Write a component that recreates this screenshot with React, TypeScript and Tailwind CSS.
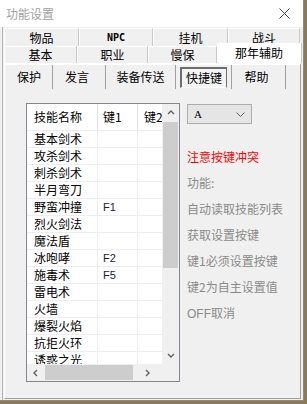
const skills: [string, string][] = [
  ["基本剑术", ""],
  ["攻杀剑术", ""],
  ["刺杀剑术", ""],
  ["半月弯刀", ""],
  ["野蛮冲撞", "F1"],
  ["烈火剑法", ""],
  ["魔法盾", ""],
  ["冰咆哮", "F2"],
  ["施毒术", "F5"],
  ["雷电术", ""],
  ["火墙", ""],
  ["爆裂火焰", ""],
  ["抗拒火环", ""],
  ["诱惑之光", ""],
];

function Chevron({ dir }: { dir: "up" | "down" | "left" | "right" }) {
  const d = {
    up: "M1 5 L4 2 L7 5",
    down: "M1 2 L4 5 L7 2",
    left: "M5 1 L2 4 L5 7",
    right: "M2 1 L5 4 L2 7",
  }[dir];
  return (
    <svg width="8" height="8" viewBox="0 0 8 8">
      <path d={d} fill="none" stroke="#606060" strokeWidth="1.4" />
    </svg>
  );
}

export default function App() {
  return (
    <div className="w-[307px] h-[404px] bg-[#8c7a52] overflow-hidden font-['Noto_Sans_CJK_SC',sans-serif] text-[12px] text-black">
      <div className="w-[304px] h-[401px] bg-[#f0f0f0] border-r border-b border-[#8a8a8a] flex flex-col">
        {/* title bar */}
        <div className="h-[27px] bg-white flex items-center justify-between pl-[6px] pr-[13px] shrink-0">
          <span className="text-[#a0a0a0] text-[12px] leading-none">功能设置</span>
          <svg width="11" height="11" viewBox="0 0 11 11">
            <path d="M0.5 0.5 L10.5 10.5 M10.5 0.5 L0.5 10.5" stroke="#444" strokeWidth="1" />
          </svg>
        </div>

        <div className="flex flex-1 min-h-0">
          <div className="w-[2px] shrink-0" />
          <div className="w-px bg-[#b4b4b4] shrink-0" />
          <div className="flex-1 flex flex-col pl-px">
            {/* outer tabs */}
            <div className="mt-px flex h-[18px]">
              {[["物品", 75], ["NPC", 74], ["挂机", 75], ["战斗", 72]].map(([t, w]) => (
                <div
                  key={t as string}
                  style={{ width: w as number }}
                  className="h-full flex items-center justify-center border-t border-l border-white border-r border-r-[#c8c8c8] leading-none"
                >
                  {t === "NPC" ? (
                    <span className="font-['DejaVu_Sans_Mono',monospace] text-[10px] font-bold">NPC</span>
                  ) : (
                    t
                  )}
                </div>
              ))}
            </div>
            <div className="flex h-[17px]">
              {[["基本", 73], ["职业", 71], ["慢保", 69]].map(([t, w]) => (
                <div
                  key={t as string}
                  style={{ width: w as number }}
                  className="h-full flex items-center justify-center border-t border-l border-white border-r border-r-[#c8c8c8] leading-none"
                >
                  {t}
                </div>
              ))}
              <div className="relative z-10 w-[85px] h-[20px] -mt-[3px] bg-white flex items-center justify-center border-r border-[#c8c8c8] text-[12px] leading-none">
                那年辅助
              </div>
            </div>

            {/* panel */}
            <div className="flex-1 mr-[2px] mb-[1px] border-t-2 border-l border-white border-r border-b border-r-[#a0a0a0] border-b-[#a0a0a0] flex flex-col">
              {/* inner tabs */}
              <div className="flex h-[24px] pl-px">
                <div className="w-[47px] flex items-center justify-center border-r border-[#a0a0a0]">保护</div>
                <div className="w-[53px] flex items-center justify-center pr-[4px] border-r border-[#a0a0a0]">发言</div>
                <div className="w-[70px] flex items-center justify-center border-r border-[#a0a0a0]">装备传送</div>
                <div className="w-[56px] flex items-center justify-center border-r border-[#a0a0a0]">
                  <div className="w-[47px] h-[21px] flex items-center justify-center border-t-2 border-l-2 border-[#6e6e6e] border-r border-b border-r-[#6e6e6e] border-b-white bg-[#f4f4f4]">
                    快捷键
                  </div>
                </div>
                <div className="w-[54px] flex items-center justify-center pr-[4px] border-r border-[#a0a0a0]">帮助</div>
              </div>

              <div className="flex mt-[14px] ml-[21px]">
                {/* list box */}
                <div className="w-[154px] h-[279px] border border-[#828790] bg-white flex flex-col">
                  <div className="flex h-[260px]">
                    <div className="w-[135px] overflow-hidden">
                      <div className="grid grid-cols-[71px_40px_24px] h-[26px]">
                        <div className="pl-[7px] flex items-center border-r border-[#e3e3e3]">技能名称</div>
                        <div className="pl-[5px] flex items-center border-r border-[#e3e3e3]">键1</div>
                        <div className="pl-[6px] flex items-center whitespace-nowrap overflow-hidden">键2</div>
                      </div>
                      {skills.map(([name, key]) => (
                        <div key={name} className="grid grid-cols-[71px_40px_24px] h-[17px] leading-[16px] border-t border-[#ededed]">
                          <div className="pl-[7px] border-r border-[#ededed] whitespace-nowrap">{name}</div>
                          <div className="pl-[5px] border-r border-[#ededed] font-['Liberation_Sans',sans-serif] text-[11px] text-[#1a1a3a]">
                            {key}
                          </div>
                          <div />
                        </div>
                      ))}
                    </div>
                    {/* vertical scrollbar */}
                    <div className="w-[17px] bg-[#f0f0f0] flex flex-col items-center">
                      <div className="h-[17px] flex items-center justify-center">
                        <Chevron dir="up" />
                      </div>
                      <div className="w-[15px] h-[146px] mt-px bg-[#cdcdcd]" />
                      <div className="flex-1" />
                      <div className="h-[17px] flex items-center justify-center">
                        <Chevron dir="down" />
                      </div>
                    </div>
                  </div>
                  {/* horizontal scrollbar */}
                  <div className="flex h-[17px]">
                    <div className="w-[135px] bg-[#f0f0f0] flex items-center">
                      <div className="w-[17px] flex justify-center">
                        <Chevron dir="left" />
                      </div>
                      <div className="w-[88px] h-[15px] ml-px bg-[#cdcdcd]" />
                      <div className="flex-1 flex justify-center">
                        <Chevron dir="right" />
                      </div>
                    </div>
                    <div className="w-[17px] bg-[#f0f0f0]" />
                  </div>
                </div>

                {/* right column */}
                <div className="ml-[7px] flex flex-col">
                  <div className="mt-px w-[65px] h-[20px] bg-[#e5e5e5] border border-[#adadad] flex items-center justify-between pl-[6px] pr-[6px]">
                    <span className="font-['Liberation_Serif',serif] text-[11px] leading-none">A</span>
                    <svg width="9" height="5" viewBox="0 0 9 5">
                      <path d="M0.5 0.5 L4.5 4.5 L8.5 0.5" fill="none" stroke="#606060" strokeWidth="1" />
                    </svg>
                  </div>
                  <div className="mt-[20px] leading-[26px] whitespace-nowrap">
                    <div className="text-[#ff0000]">注意按键冲突</div>
                    <div className="text-[#8a8a8a]">功能:</div>
                    <div className="text-[#8a8a8a]">自动读取技能列表</div>
                    <div className="text-[#8a8a8a]">获取设置按键</div>
                    <div className="text-[#8a8a8a]">键1必须设置按键</div>
                    <div className="text-[#8a8a8a]">键2为自主设置值</div>
                    <div className="text-[#8a8a8a]">
                      <span className="font-['Liberation_Sans',sans-serif]">OFF</span>取消
                    </div>
                  </div>
                </div>
              </div>
            </div>
          </div>
        </div>
      </div>
    </div>
  );
}
